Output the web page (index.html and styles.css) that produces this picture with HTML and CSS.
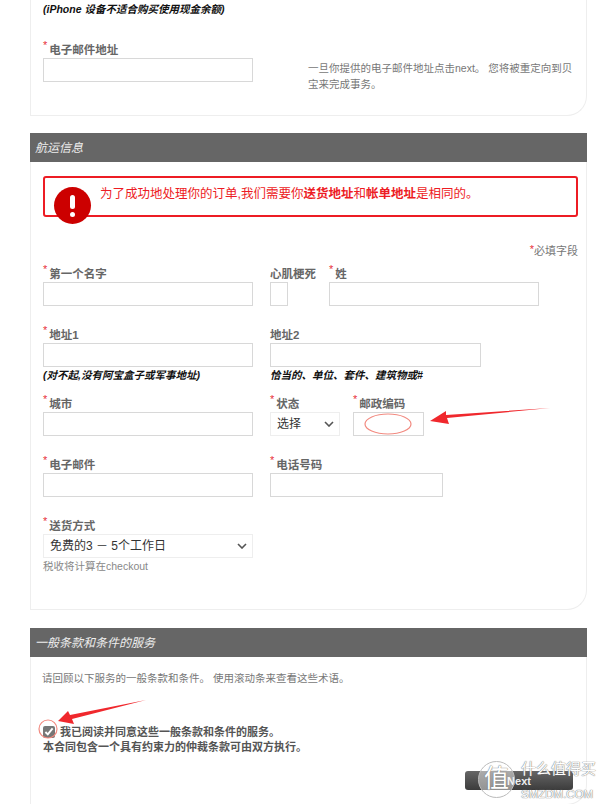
FILE: index.html
```html
<!DOCTYPE html>
<html lang="zh-CN">
<head>
  <meta charset="UTF-8">
  <meta name="viewport" content="width=device-width, initial-scale=1.0">
  <title>航运信息</title>
  <link rel="stylesheet" href="styles.css">
</head>
<body>
  <div class="page">
    <div class="panel panel-top">
      <p class="hint hint-top">(iPhone 设备不适合购买使用现金余额)</p>
      <div class="row row-email">
        <div class="field w210">
          <label><span class="req">*</span>电子邮件地址</label>
          <input type="text">
        </div>
        <p class="help">一旦你提供的电子邮件地址点击next。 您将被重定向到贝宝来完成事务。</p>
      </div>
    </div>

    <div class="head">航运信息</div>
    <div class="panel panel-ship">
      <div class="alert">
        <div class="alert-icon"></div>
        <p>为了成功地处理你的订单,我们需要你<b>送货地址</b>和<b>帐单地址</b>是相同的。</p>
      </div>
      <p class="required"><span class="req">*</span>必填字段</p>

      <div class="row">
        <div class="field w210">
          <label><span class="req">*</span>第一个名字</label>
          <input type="text">
        </div>
        <div class="field w46">
          <label>心肌梗死</label>
          <input type="text" class="w18">
        </div>
        <div class="field w210">
          <label><span class="req">*</span>姓</label>
          <input type="text">
        </div>
      </div>

      <div class="row row-addr">
        <div class="field w210">
          <label><span class="req">*</span>地址1</label>
          <input type="text">
          <p class="hint">(对不起,没有阿宝盒子或军事地址)</p>
        </div>
        <div class="field w211">
          <label>地址2</label>
          <input type="text">
          <p class="hint">恰当的、单位、套件、建筑物或#</p>
        </div>
      </div>

      <div class="row row-city">
        <div class="field w210">
          <label><span class="req">*</span>城市</label>
          <input type="text">
        </div>
        <div class="field w70">
          <label><span class="req">*</span>状态</label>
          <select><option>选择</option></select>
        </div>
        <div class="field w71">
          <label><span class="req">*</span>邮政编码</label>
          <input type="text">
        </div>
      </div>

      <div class="row row-mail">
        <div class="field w210">
          <label><span class="req">*</span>电子邮件</label>
          <input type="text">
        </div>
        <div class="field w173">
          <label><span class="req">*</span>电话号码</label>
          <input type="text">
        </div>
      </div>

      <div class="row row-mail">
        <div class="field w210">
          <label><span class="req">*</span>送货方式</label>
          <select><option>免费的3 － 5个工作日</option></select>
          <p class="tax">税收将计算在checkout</p>
        </div>
      </div>
    </div>

    <div class="head head-terms">一般条款和条件的服务</div>
    <div class="panel panel-terms">
      <p class="review">请回顾以下服务的一般条款和条件。 使用滚动条来查看这些术语。</p>
      <div class="agree">
        <p><input type="checkbox" checked>我已阅读并同意这些一般条款和条件的服务。</p>
        <p>本合同包含一个具有约束力的仲裁条款可由双方执行。</p>
      </div>
      <div class="actions"><button class="next">Next</button></div>
    </div>
  </div>

  <!-- red marks drawn over the screenshot -->
  <svg class="marks" width="600" height="804" viewBox="0 0 600 804">
    <ellipse cx="388" cy="424" rx="23" ry="10" fill="none" stroke="#f28a80" stroke-width="1.2"/>
    <path d="M550 408 L447 418 L449 424 L430 421 L446 411 L446 415 Z" fill="#f0282d"/>
    <circle cx="48" cy="729" r="9" fill="none" stroke="#f28a80" stroke-width="1.2"/>
    <path d="M146 700 L72 719 L74 724 L58 721 L68 711 L70 715 Z" fill="#f0282d"/>
  </svg>

  <div class="mark-logo">
    <span class="mark-seal">值</span>
    <span class="mark-name">什么值得买</span>
    <span class="mark-site">SMZDM.COM</span>
  </div>
</body>
</html>
```

FILE: styles.css
```css
html, body {
  margin: 0;
  height: 804px;
  overflow: hidden;
  background: #fff;
}
body {
  font-family: "Liberation Sans", "Noto Sans CJK SC", sans-serif;
  font-size: 11px;
  color: #777;
  position: relative;
}
p {
  margin: 0;
}
.page {
  width: 557px;
  margin-left: 30px;
}
.panel {
  box-sizing: border-box;
  border-left: 1px solid #eee;
  border-right: 1px solid #eee;
  padding-left: 12px;
}
.panel-top {
  height: 116px;
  padding-top: 2px;
  border-bottom: 1px solid #eee;
  border-bottom-right-radius: 20px;
}
.panel-ship {
  height: 448px;
  padding-top: 14px;
  border-bottom: 1px solid #eee;
  border-bottom-right-radius: 20px;
}
.panel-terms {
  height: 148px;
  padding-top: 13px;
  border-bottom: 1px solid #eee;
  border-bottom-right-radius: 20px;
}
.head {
  margin-top: 17px;
  height: 29px;
  line-height: 30px;
  padding-left: 5px;
  background: #666;
  color: #eee;
  font-size: 12px;
  font-style: italic;
}
.head-terms {
  margin-top: 18px;
}
.row {
  display: flex;
  gap: 17px;
}
.row-email {
  margin-top: 26px;
  gap: 55px;
}
.row-addr {
  margin-top: 21px;
}
.row-city {
  margin-top: 14px;
  gap: 13px;
}
.row-city .w210 {
  margin-right: 4px;
}
.row-mail {
  margin-top: 21px;
}
.field {
  flex: none;
}
.field label {
  display: block;
  height: 16px;
  line-height: 17px;
  font-size: 11.5px;
  font-weight: bold;
  color: #666;
  white-space: nowrap;
}
.field input[type="text"], .field select {
  display: block;
  box-sizing: border-box;
  width: 100%;
  height: 24px;
  margin: 0;
  background: #fff;
  border: 1px solid #d8d8d8;
  border-radius: 0;
  outline: 0;
}
.field select {
  appearance: none;
  border-color: #eee;
  padding-left: 6px;
  font: 12px "Liberation Sans", "Noto Sans CJK SC", sans-serif;
  color: #333;
  background: #fff url("data:image/svg+xml,%3Csvg xmlns='http://www.w3.org/2000/svg' width='10' height='6'%3E%3Cpath d='M1 1l4 4 4-4' fill='none' stroke='%23555' stroke-width='1.6'/%3E%3C/svg%3E") no-repeat right 5px center;
}
.w210 { width: 210px; }
.w211 { width: 211px; }
.w173 { width: 173px; }
.w70 { width: 70px; }
.w71 { width: 71px; }
.w46 { width: 42px; }
.field input.w18 { width: 18px; }
.req {
  color: #e8303a;
  font-size: 11px;
  font-weight: normal;
  margin-right: 2px;
  position: relative;
  top: -5px;
}
.hint {
  margin-top: 1px;
  font-size: 10.5px;
  line-height: 14px;
  font-weight: bold;
  font-style: italic;
  color: #111;
  white-space: nowrap;
}
.hint-top {
  margin-top: 0;
}
.help {
  width: 265px;
  margin-top: 18px;
  font-size: 10.5px;
  line-height: 16px;
  color: #777;
}
.alert {
  position: relative;
  box-sizing: border-box;
  width: 535px;
  height: 41px;
  border: 2px solid #ed1c24;
  border-radius: 3px;
  padding: 7px 0 0 55px;
  color: #ed1c24;
  font-size: 12.5px;
  line-height: 18px;
}
.alert-icon {
  position: absolute;
  left: 9px;
  top: 9px;
  width: 37px;
  height: 37px;
  border-radius: 50%;
  background: #cc0000;
}
.alert-icon::before {
  content: "";
  position: absolute;
  left: 16px;
  top: 8px;
  width: 5px;
  height: 14px;
  border-radius: 3px;
  background: #fff;
}
.alert-icon::after {
  content: "";
  position: absolute;
  left: 16px;
  top: 25px;
  width: 5px;
  height: 5px;
  border-radius: 50%;
  background: #fff;
}
.required {
  width: 535px;
  margin-top: 26px;
  margin-bottom: 7px;
  text-align: right;
  line-height: 16px;
}
.required .req {
  margin-right: 0;
  top: -2px;
}
.tax {
  margin-top: 1px;
  line-height: 15px;
  font-size: 10.5px;
  color: #888;
}
.review {
  margin-left: -1px;
  line-height: 16px;
  font-size: 10.5px;
}
.agree {
  margin-top: 39px;
  font-size: 11px;
  line-height: 15px;
  font-weight: bold;
  color: #555;
}
.agree input {
  width: 12px;
  height: 12px;
  margin: 0 5px 0 0;
  vertical-align: -2px;
  accent-color: #777;
}
.actions {
  display: flex;
  justify-content: flex-end;
  margin-top: 16px;
  padding-right: 13px;
}
.next {
  width: 108px;
  height: 19px;
  padding: 0;
  border: 0;
  border-radius: 3px;
  background: linear-gradient(#666, #3c3c3c);
  color: #eee;
  font: bold 11px "Liberation Sans", sans-serif;
}
.marks {
  position: absolute;
  left: 0;
  top: 0;
  pointer-events: none;
}
.mark-logo {
  position: absolute;
  left: 478px;
  top: 761px;
  width: 122px;
  height: 40px;
  color: #fff;
  text-shadow: 0 0 1px #777, 0 0 1px #777;
}
.mark-seal {
  position: absolute;
  left: 0;
  top: 0;
  box-sizing: border-box;
  width: 37px;
  height: 37px;
  border: 1px solid #bbb;
  border-radius: 50%;
  background: rgba(255, 255, 255, 0.45);
  text-align: center;
  font-size: 25px;
  line-height: 33px;
}
.mark-name {
  position: absolute;
  left: 43px;
  top: 0;
  font-size: 15px;
  line-height: 15px;
  white-space: nowrap;
}
.mark-site {
  position: absolute;
  left: 43px;
  top: 27px;
  font-size: 11.5px;
  line-height: 12px;
  white-space: nowrap;
}
```
